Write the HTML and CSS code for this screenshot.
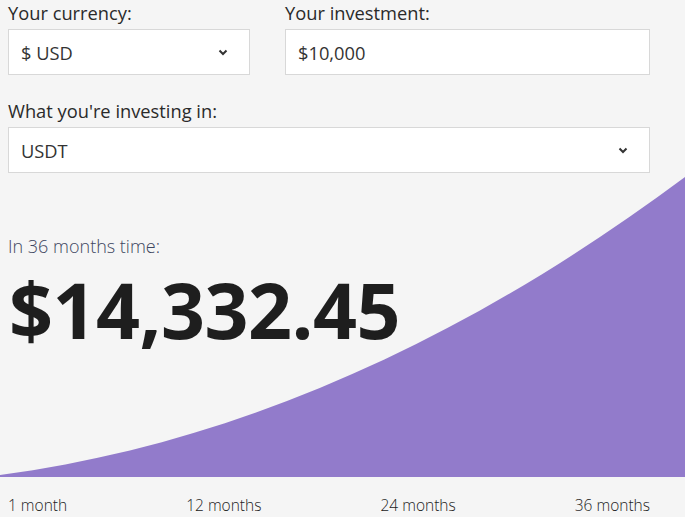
FILE: index.html
```html
<!DOCTYPE html>
<html lang="en">
<head>
<meta charset="utf-8">
<title>Investment calculator</title>
<link rel="stylesheet" href="styles.css">
</head>
<body>
<div class="calc">
  <div class="form">
    <div class="field">
      <div class="label">Your currency:</div>
      <div class="control select"><span>$ USD</span>
        <svg class="chev" width="10" height="7" viewBox="0 0 10 7"><path d="M1.5 1.5 L5 5 L8.5 1.5" fill="none" stroke="#333" stroke-width="2"/></svg>
      </div>
    </div>
    <div class="field">
      <div class="label">Your investment:</div>
      <div class="control"><span>$10,000</span></div>
    </div>
    <div class="field wide">
      <div class="label">What you're investing in:</div>
      <div class="control select"><span>USDT</span>
        <svg class="chev" width="10" height="7" viewBox="0 0 10 7"><path d="M1.5 1.5 L5 5 L8.5 1.5" fill="none" stroke="#333" stroke-width="2"/></svg>
      </div>
    </div>
  </div>
  <div class="result">
    <svg class="chart" viewBox="0 0 685 304" preserveAspectRatio="none"><path d="M0,304 L0,302 C250,269 480,157 685,4 L685,304 Z" fill="#927bcb"/></svg>
    <div class="caption">In 36 months time:</div>
    <div class="amount">$14,332.45</div>
  </div>
  <div class="axis">
    <span>1 month</span>
    <span>12 months</span>
    <span>24 months</span>
    <span>36 months</span>
  </div>
</div>
</body>
</html>
```

FILE: styles.css
```css
html, body {
  margin: 0;
  padding: 0;
  background: #f5f5f5;
}
body {
  font-family: "Open Sans", "Liberation Sans", sans-serif;
  color: #222;
  overflow: hidden;
}
.calc {
  width: 685px;
}
.form {
  display: grid;
  grid-template-columns: 242px 1fr;
  column-gap: 35px;
  row-gap: 23px;
  padding: 0 35px 0 8px;
}
.field.wide {
  grid-column: 1 / 3;
}
.label {
  font-size: 18.3px;
  line-height: 25px;
  color: #2a2a2a;
  margin-bottom: 4px;
}
.control {
  box-sizing: border-box;
  height: 46px;
  background: #fff;
  border: 1px solid #d8d8d8;
  padding: 0 21px 0 12px;
  display: flex;
  align-items: center;
  justify-content: space-between;
  font-size: 18.3px;
  color: #333;
}
.chev {
  display: block;
}
.result {
  position: relative;
  height: 304px;
  box-sizing: border-box;
  padding: 63px 8px 0;
}
.chart {
  position: absolute;
  left: 0;
  top: 0;
  width: 100%;
  height: 100%;
  display: block;
}
.caption, .amount {
  position: relative;
}
.caption {
  font-size: 18px;
  font-weight: 300;
  line-height: 20px;
  color: #3d4660;
}
.amount {
  font-size: 77px;
  font-weight: 700;
  line-height: 92px;
  margin-top: 8px;
  padding-left: 1px;
  color: #1e1e1e;
  letter-spacing: -0.5px;
}
.axis {
  display: flex;
  justify-content: space-between;
  padding: 0 35px 0 8px;
  margin-top: 17px;
  font-size: 15.5px;
  font-weight: 300;
  line-height: 22px;
  color: #222;
}
```
